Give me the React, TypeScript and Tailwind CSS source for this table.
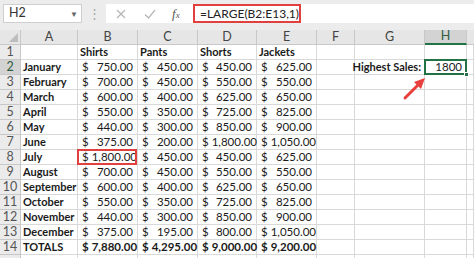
import React from "react";

const months = [
  ["January", 750, 450, 450, 625],
  ["February", 700, 450, 550, 550],
  ["March", 600, 400, 625, 650],
  ["April", 550, 350, 725, 825],
  ["May", 440, 300, 850, 900],
  ["June", 375, 200, 1800, 1050],
  ["July", 1800, 450, 450, 625],
  ["August", 700, 450, 550, 550],
  ["September", 600, 400, 625, 650],
  ["October", 550, 350, 725, 825],
  ["November", 440, 300, 850, 900],
  ["December", 375, 195, 800, 1050],
] as const;

const totals = [7880, 4295, 9000, 9200];

const fmt = (n: number) =>
  n.toLocaleString("en-US", { minimumFractionDigits: 2, maximumFractionDigits: 2 });

const cols = "grid-cols-[21px_57px_60px_60px_59px_60px_38px_70px_42px_1fr]";
const cell = "h-[15px] border-r border-b border-[#d9d9d9] overflow-visible whitespace-nowrap";

function Money({ value, bold, boxed }: { value: number; bold?: boolean; boxed?: boolean }) {
  return (
    <div className={`${cell} relative flex justify-between items-center gap-[3px] pl-[4px] pr-[4px] ${bold ? "font-bold" : ""}`}>
      <span>$</span>
      <span>{fmt(value)}</span>
      {boxed && (
        <div className="absolute left-[-1px] top-[-1px] w-[60px] h-[16px] border-2 border-[#e2403f]" />
      )}
    </div>
  );
}

function RowHead({ n, active }: { n?: number; active?: boolean }) {
  return (
    <div
      className={`h-[15px] border-r border-b border-[#c8c8c8] flex items-center justify-center text-[12.5px] ${
        active ? "bg-[#d3d3d3] text-[#2e5c40]" : "bg-[#ebebeb] text-[#555]"
      }`}
    >
      {n}
    </div>
  );
}

function Blank({ n = 1 }: { n?: number }) {
  return (
    <>
      {Array.from({ length: n }).map((_, i) => (
        <div key={i} className={cell} />
      ))}
    </>
  );
}

export default function App() {
  return (
    <div
      className="w-[474px] h-[258px] overflow-hidden bg-white text-[#1a1a1a] text-[11.5px]"
      style={{ fontFamily: "Lato, 'Open Sans', sans-serif" }}
    >
      {/* Formula bar */}
      <div className="h-[30px] bg-[#ececec] flex items-start pt-[4px] pl-[3px]">
        <div className="w-[79px] h-[19px] bg-white border border-[#cfcfcf] flex items-center justify-between pl-[5px] pr-[3px] text-[12.5px] text-[#333]">
          <span>H2</span>
          <span className="text-[8px] text-[#666]">▼</span>
        </div>
        <div className="w-[24px] h-[19px] flex items-center justify-center text-[#a8a8a8] text-[13px]">⋮</div>
        <div className="flex-1 h-[19px] bg-white flex items-center">
          <div className="w-[87px] flex items-center">
            <svg width="10" height="10" viewBox="0 0 10 10" className="ml-[10px]">
              <path d="M1 1 L9 9 M9 1 L1 9" stroke="#b5b5b5" strokeWidth="1.2" />
            </svg>
            <svg width="12" height="10" viewBox="0 0 12 10" className="ml-[18px]">
              <path d="M1 5.5 L4.5 9 L11 1" stroke="#b5b5b5" strokeWidth="1.2" fill="none" />
            </svg>
            <span className="ml-[16px] italic text-[13px] text-[#555]" style={{ fontFamily: "'Liberation Serif', serif" }}>
              f<span className="text-[9px]">x</span>
            </span>
          </div>
          <div className="h-[19px] w-[108px] border-2 border-[#e2403f] flex items-center pl-[5px] text-[12px] text-[#222]">
            =LARGE(B2:E13,1)
          </div>
        </div>
      </div>

      {/* Sheet */}
      <div className={`grid ${cols}`}>
        {/* Column headers */}
        <div className="h-[15px] bg-[#e6e6e6] border-r border-b border-[#c8c8c8] relative">
          <div className="absolute right-[2px] bottom-[2px] w-0 h-0 border-l-[9px] border-l-transparent border-b-[9px] border-b-[#bdbdbd]" />
        </div>
        {["A", "B", "C", "D", "E", "F", "G"].map((c) => (
          <div
            key={c}
            className="h-[15px] bg-[#e6e6e6] border-r border-b border-[#c8c8c8] flex items-center justify-center text-[12.5px] text-[#444]"
          >
            {c}
          </div>
        ))}
        <div className="h-[15px] bg-[#d3d3d3] border-r border-[#c8c8c8] border-b-2 border-b-[#217346] flex items-center justify-center text-[12.5px] text-[#2e5c40]">
          H
        </div>
        <div className="h-[15px] bg-[#e6e6e6] border-b border-[#c8c8c8]" />

        {/* Row 1 */}
        <RowHead n={1} />
        <Blank />
        {["Shirts", "Pants", "Shorts", "Jackets"].map((h) => (
          <div key={h} className={`${cell} font-bold text-[11px] pl-[2px] flex items-center`}>
            {h}
          </div>
        ))}
        <Blank n={4} />

        {/* Months */}
        {months.map((m, i) => {
          const row = i + 2;
          return (
            <React.Fragment key={m[0]}>
              <RowHead n={row} active={row === 2} />
              <div className={`${cell} font-bold text-[11px] pl-[2px] flex items-center`}>{m[0]}</div>
              <Money value={m[1]} boxed={row === 8} />
              <Money value={m[2]} />
              <Money value={m[3]} />
              <Money value={m[4]} />
              <div className={cell} />
              {row === 2 ? (
                <>
                  <div className={`${cell} font-bold text-[11px] flex items-center justify-end pr-[3px]`}>Highest Sales:</div>
                  <div className={`${cell} relative flex items-center justify-end pr-[4px]`}>
                    1800
                    <div className="absolute left-[-1px] top-[-1px] w-[43px] h-[16px] border-2 border-[#217346]" />
                    <div className="absolute right-[-3px] bottom-[-3px] w-[5px] h-[5px] bg-[#217346] border border-white" />
                    <svg
                      width="24"
                      height="24"
                      viewBox="0 0 24 24"
                      className="absolute left-[-22px] top-[16px] overflow-visible"
                    >
                      <path d="M2 22 L17 7" stroke="#e8403c" strokeWidth="3" strokeLinecap="round" />
                      <path d="M22 2 L11 6 L18 13 Z" fill="#e8403c" />
                    </svg>
                  </div>
                </>
              ) : (
                <Blank n={2} />
              )}
              <div className={cell} />
            </React.Fragment>
          );
        })}

        {/* Totals */}
        <RowHead n={14} />
        <div className={`${cell} font-bold text-[11px] pl-[2px] flex items-center`}>TOTALS</div>
        {totals.map((t) => (
          <Money key={t} value={t} bold />
        ))}
        <Blank n={4} />

        {/* Row 15 */}
        <RowHead />
        <Blank n={9} />
      </div>
    </div>
  );
}
